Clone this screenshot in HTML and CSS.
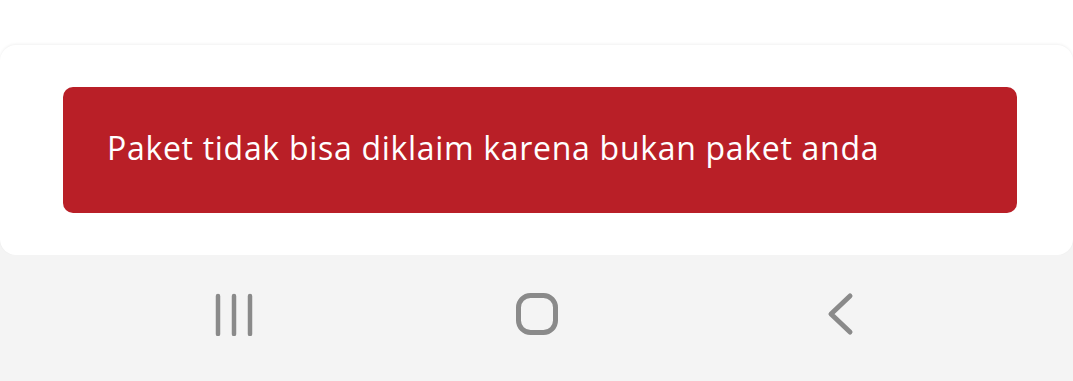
FILE: index.html
```html
<!DOCTYPE html>
<html lang="id">
<head>
    <meta charset="UTF-8">
    <meta name="viewport" content="width=device-width, initial-scale=1.0">
    <title>Klaim Paket</title>
    <link rel="stylesheet" href="styles.css">
</head>
<body>
    <div class="atas"></div>
    <div class="sheet-wrap">
        <div class="sheet">
            <div class="alert">Paket tidak bisa diklaim karena bukan paket anda</div>
        </div>
    </div>
    <nav class="navbar">
        <span class="nav-item">
            <svg width="44" height="44" viewBox="0 0 44 44">
                <path d="M6 4 V42 M22 4 V42 M38 4 V42" stroke="#8a8a8a" stroke-width="4.5" stroke-linecap="round" fill="none"/>
            </svg>
        </span>
        <span class="nav-item">
            <svg width="44" height="44" viewBox="0 0 44 44">
                <rect x="3.5" y="3.5" width="37" height="37" rx="12" stroke="#8a8a8a" stroke-width="5" fill="none"/>
            </svg>
        </span>
        <span class="nav-item">
            <svg width="44" height="44" viewBox="0 0 44 44">
                <path d="M32 4 L13 22 L32 40" stroke="#8a8a8a" stroke-width="5" stroke-linecap="round" stroke-linejoin="round" fill="none"/>
            </svg>
        </span>
    </nav>
</body>
</html>
```

FILE: styles.css
```css
body {
    margin: 0;
    background-color: #fff;
    font-family: "Open Sans", Arial, sans-serif;
}
.atas {
    height: 45px;
}
.sheet-wrap {
    background: linear-gradient(to bottom, #fff calc(100% - 20px), #f4f4f4 calc(100% - 20px));
}
.sheet {
    background-color: #fff;
    border-radius: 16px;
    box-shadow: 0 -1px 3px rgba(0, 0, 0, 0.06);
    padding: 42px 56px 42px 63px;
}
.alert {
    background-color: #b91f27;
    color: #fff;
    border-radius: 10px;
    height: 126px;
    box-sizing: border-box;
    padding: 0 44px 6px;
    display: flex;
    align-items: center;
    font-size: 32px;
    letter-spacing: 0.7px;
}
.navbar {
    background-color: #f4f4f4;
    height: 126px;
    padding: 0 82px;
    display: grid;
    grid-template-columns: repeat(3, 1fr);
    align-items: center;
    box-sizing: border-box;
}
.nav-item {
    display: flex;
    justify-content: center;
    padding-bottom: 8px;
}
```
